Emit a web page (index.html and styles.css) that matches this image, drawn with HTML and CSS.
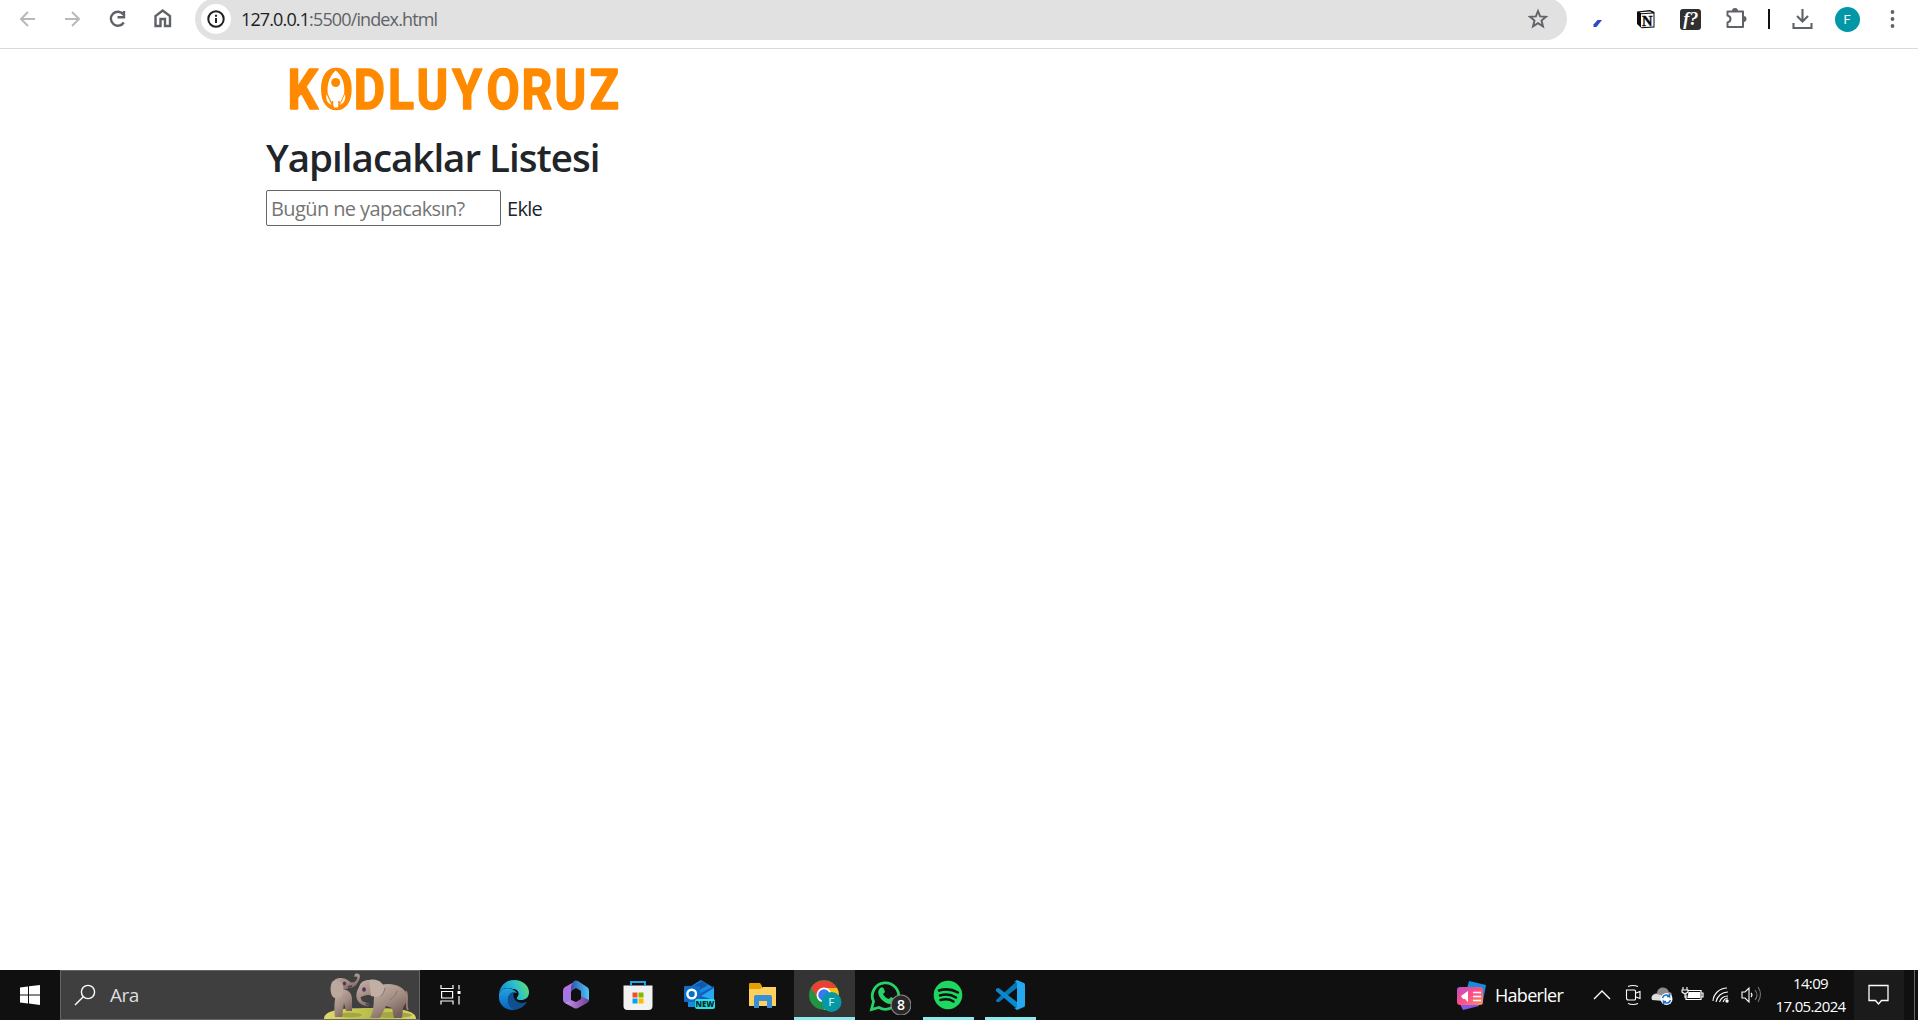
FILE: index.html
```html
<!DOCTYPE html>
<html lang="tr">
<head>
<meta charset="utf-8">
<title>Yapılacaklar Listesi</title>
<link rel="stylesheet" href="styles.css">
</head>
<body>
<header class="toolbar">
  <nav class="nav">
    <svg class="nav-icon faded" viewBox="0 0 45 38"><path d="M30 19H16.500M23 12l-7 7 7 7"/></svg>
    <svg class="nav-icon faded" viewBox="0 0 45 38"><path d="M15 19h13.500M22 12l7 7-7 7"/></svg>
    <svg class="nav-icon" viewBox="0 0 45 38"><path class="bold" d="M28.500 14.500a7 7 0 1 0 .3 8M29 11v6.300h-6.500"/></svg>
    <svg class="nav-icon" viewBox="0 0 45 38"><path class="bold" d="M15.500 26V16l7.200-5.500L30 16v10h-5v-7h-4.500v7z"/></svg>
  </nav>
  <div class="omnibox">
    <span class="site-info"><svg width="18" height="18" viewBox="0 0 18 18"><circle cx="9" cy="9" r="7.700" fill="none" stroke="#202124" stroke-width="2"/><path d="M9 8v5M9 4.700v2" stroke="#202124" stroke-width="2"/></svg></span>
    <span class="url">127.0.0.1<span class="path">:5500/index.html</span></span>
    <svg class="star" width="22" height="22" viewBox="0 0 22 22"><path d="M11 3l2.100 5.400 5.900.4-4.500 3.700 1.500 5.800-5-3.200-5 3.200 1.500-5.800L3 8.800l5.900-.4z" fill="none" stroke="#5f6368" stroke-width="1.900"/></svg>
  </div>
  <div class="actions">
    <svg width="46" height="38" viewBox="0 0 46 38"><path d="M18.500 27v-2.500l4-4.500H27l-5.500 7z" fill="#3049c5"/></svg>
    <svg class="notion" width="44" height="38" viewBox="0 0 44 38"><path d="M13 11.500l13-1.500 4.500 2V27.500l-13 .8-4.500-4.200z" fill="#0b0b0b"/><path d="M17 14.300l12.500-.8v13l-12.500.7zM15.500 12.300l10.500-.9 2 1-10.300.8z" fill="#fff"/><text x="23.300" y="25.500" text-anchor="middle" font-family="Liberation Serif, serif" font-size="14.500" font-weight="700" fill="#0b0b0b" stroke="#0b0b0b" stroke-width=".4">N</text></svg>
    <svg width="45" height="38" viewBox="0 0 45 38"><rect x="12" y="9" width="21" height="21" rx="3" fill="#303030"/><text x="22.800" y="25" text-anchor="middle" font-family="Liberation Serif, serif" font-size="18" font-weight="700" font-style="italic" fill="#fff">f?</text></svg>
    <svg width="46" height="38" viewBox="0 0 46 38"><path d="M14.500 11.500h15.500v15.500H14.500v-4.500c4-1 4-6 0-7z" fill="none" stroke="#5f6368" stroke-width="2" stroke-linejoin="round"/><path d="M19 11a3 3 0 0 1 6 0zM30.500 16a3 3 0 0 1 0 6z" fill="#5f6368"/></svg>
    <span class="divider"></span>
    <svg width="46" height="38" viewBox="0 0 46 38"><path d="M23.500 9v12M18 16l5.500 5.500L29 16M14.500 23v5h18v-5" fill="none" stroke="#5f6368" stroke-width="2.100"/></svg>
    <span class="slot"><span class="avatar">F</span></span>
    <svg width="43" height="38" viewBox="0 0 43 38" fill="#5f6368"><circle cx="21.500" cy="12" r="1.900"/><circle cx="21.500" cy="19" r="1.900"/><circle cx="21.500" cy="26" r="1.900"/></svg>
  </div>
</header>

<main class="page">
  <svg class="logo" width="370" height="80" viewBox="0 0 370 80" role="img" aria-label="Kodluyoruz">
    <text class="logo-text" transform="translate(0 59) scale(.86 1)" x="25 62.500 102 142 175 216.500 256.500 297 335.500 376.500">KODLUYORUZ</text>
    <rect x="57" y="19.500" width="26" height="38" rx="11" fill="#ff8a00"/>
    <path d="M69.700 20.500c-5 4-9 12-8 23l4 9 2.500 5h3.500l2.500-5 4-9c1-11-3-19-8.500-23zM60.500 44c-1 6 1 9 5 11zM79 44c1 6-1 9-5 11z" fill="#fff"/>
    <circle cx="69.700" cy="32.500" r="4.500" fill="#ff8a00"/><path d="M66.500 51v5M73 51v5" stroke="#ff8a00" stroke-width="1.500"/>
  </svg>
  <h1 class="title">Yapılacaklar Listesi</h1>
  <div class="entry">
    <input class="task" type="text" placeholder="Bugün ne yapacaksın?">
    <span class="add">Ekle</span>
  </div>
</main>

<footer class="taskbar">
  <div class="start"><svg width="20" height="20" viewBox="0 0 20 20" fill="#fff"><path d="M0 2.600l8-1.100V9.500H0zM9 1.300L20 0v9.500H9zM0 10.500h8v8l-8-1.100zM9 10.500h11V20L9 18.600z"/></svg></div>
  <div class="search">
    <svg class="lens" width="22" height="22" viewBox="0 0 22 22"><circle cx="14" cy="8" r="6.600"/><path d="M9.300 12.700L1 21"/></svg>
    <span class="search-label">Ara</span>
    <svg class="elephants" width="96" height="48" viewBox="0 0 96 48">
      <defs>
        <linearGradient id="skin" x1="0" y1="0" x2=".6" y2="1"><stop offset="0" stop-color="#c7b5a8"/><stop offset=".6" stop-color="#a28d83"/><stop offset="1" stop-color="#765f59"/></linearGradient>
        <linearGradient id="grass" x2="1"><stop stop-color="#e1d96d"/><stop offset=".5" stop-color="#b7bd4b"/><stop offset="1" stop-color="#d8d46a"/></linearGradient>
      </defs>
      <path d="M1 48c0-8 12-11 46-11s46 3 46 11z" fill="url(#grass)"/>
      <ellipse cx="27" cy="44" rx="12" ry="2.500" fill="#a3a83e"/><ellipse cx="69" cy="44" rx="20" ry="3" fill="#a3a83e"/>
      <path d="M14 19c7-2 14 0 15 8v13h-6l-2-8-2 14h-7c-1-6-1-18 2-27z" fill="url(#skin)"/>
      <path d="M9 15C9 6 20 5 26 10c3 3 7 1 8-2 1-2 0-3-3-2l1-3c6-2 6 4 3 8-2 4-5 6-9 6l-7 3z" fill="url(#skin)"/>
      <path d="M9 11c-3 6-1 16 3 16 7 0 10-5 8-12-1-5-7-8-11-4z" fill="#bba79b"/><ellipse cx="21.500" cy="12.500" rx="1.600" ry="2" fill="#54345c"/><path d="M25 16l4-1" stroke="#54345c" stroke-width="1.500"/>
      <path d="M58 14c9-3 23 0 26 10 1 8-4 11-4 14l-1 9h-8l-2-10-6-2-6 12h-10c5-9 3-20 5-28z" fill="url(#skin)"/>
      <path d="M83 20c3 6-1 14 2 19" fill="none" stroke="#a18478" stroke-width="1.600"/>
      <path d="M36 16C39 6 53 8 58 15c2 8-6 11-12 9-3 0-9 1-8 4 1 3 4 3 7 4 3 2 1 4-2 3-10-2-12-11-7-19z" fill="url(#skin)"/>
      <path d="M46 9c10-2 16 4 15 11-2 5-7 7-13 5z" fill="#c1afa3"/><path d="M62 17c-1 4-2 6-4 8M74 20c-1 4-4 7-7 9" stroke="#887268" fill="none"/><ellipse cx="41" cy="18.500" rx="1.800" ry="2.200" fill="#54345c"/><path d="M38 26l2 2M43 33l3 1" stroke="#54345c" stroke-width="1.500"/>
    </svg>
  </div>
  <div class="taskview"><svg width="22" height="20" viewBox="0 0 22 20" fill="none" stroke="#fff" stroke-width="1.200"><path d="M1 0v3.500h12V0M1 19.500V16h12v3.500M1.600 6.500h11v6.500h-11zM19 0v4.500M19 11v8.500"/><path d="M17.500 6h3v3h-3z" fill="#fff" stroke="none"/></svg></div>
  <div class="apps">
    <div class="app"><svg width="30" height="30" viewBox="0 0 30 30">
      <defs><linearGradient id="edgeA" x2="1" y1=".3"><stop stop-color="#168bd3"/><stop offset=".5" stop-color="#2bc1cd"/><stop offset="1" stop-color="#6be05c"/></linearGradient><linearGradient id="edgeB" x2="0" y2="1"><stop stop-color="#21a4e1"/><stop offset="1" stop-color="#0863bd"/></linearGradient></defs>
      <path d="M0 13C2 4 8 0 15 0c9 0 15 6 15 12 0 6-4 8-8 8-5 0-5-2-3-4 2-4-1-7-5-7C8 7 3 8 0 13z" fill="url(#edgeA)"/>
      <path d="M0 14c2-7 13-8 18-1-5-2-9 2-9 7 0 6 4 9 9 9-11 4-20-6-18-15z" fill="url(#edgeB)"/><path d="M9 18c1-4 3-6 6-6-2 6 2 11 8 11 2 0 3-1 5-1-4 6-9 8-13 7-5-2-7-6-6-11z" fill="#114f91"/></svg></div>
    <div class="app"><svg width="28" height="30" viewBox="0 0 28 30">
      <defs><linearGradient id="offA" x2="0" y2="1"><stop stop-color="#c16be4"/><stop offset="1" stop-color="#8f7fe0"/></linearGradient><linearGradient id="offB" x2="1"><stop stop-color="#3451a8"/><stop offset="1" stop-color="#4cc8fa"/></linearGradient><linearGradient id="offC" x2="1"><stop stop-color="#cb91ee"/><stop offset="1" stop-color="#704192"/></linearGradient></defs>
      <path d="M14 1L3 7Q1 8 1 11v9q0 2 2 3l6 3V12z" fill="url(#offA)"/><path d="M12 1q2-1 4 0l9 6q2 1 2 4v10l-8-4v-6l-5-3-5 3V6z" fill="url(#offB)"/><path d="M3 23l6-3 5 2 5-3v-3l8 4q0 2-2 3l-9 5q-2 1-4 0z" fill="url(#offC)"/></svg></div>
    <div class="app"><svg width="30" height="30" viewBox="0 0 30 30"><path d="M.5 5.500h29V26q0 4-4 4h-21q-4 0-4-4z" fill="#f2f2f3"/><path d="M8 6V2h14v4" fill="none" stroke="#20a5e8" stroke-width="2"/><path d="M9.500 12.500h5v5h-5z" fill="#f25022"/><path d="M15.500 12.500h5v5h-5z" fill="#7fba00"/><path d="M9.500 18.500h5v5h-5z" fill="#00a4ef"/><path d="M15.500 18.500h5v5h-5z" fill="#ffb900"/></svg></div>
    <div class="app"><svg width="31" height="30" viewBox="0 0 31 30"><path d="M4 8l13-8 13 8v14l-13 5H4z" fill="#138cdb"/><path d="M9 6l9-5 6 4-10 6z" fill="#1a55ad"/><path d="M15 14l15-8v15H15z" fill="#1b5bc0"/><path d="M17 16l13-8v12z" fill="#28a8ee"/><rect x="0" y="6" width="16" height="16" rx="1" fill="#0b6fc9"/><circle cx="7.700" cy="14" r="4.300" fill="none" stroke="#fff" stroke-width="2.400"/><rect x="11" y="19" width="20" height="10" rx="2" fill="#2ce1dd"/><text x="21" y="27" text-anchor="middle" font-family="Open Sans, sans-serif" font-size="7.800" font-weight="800" fill="#062c36">NEW</text></svg></div>
    <div class="app"><svg width="28" height="28" viewBox="0 0 28 28"><path d="M1 3q0-1 1-1h10l2 3v4H1z" fill="#e3a003"/><path d="M1 8h11l3-2h13v19H1z" fill="#ffd15c"/><path d="M6 27V16q0-2 2-2h14q2 0 2 2v11h-5v-7h-8v7z" fill="#398fd7"/></svg></div>
    <div class="app active"><svg width="33" height="33" viewBox="0 0 33 33"><circle cx="15" cy="15" r="15" fill="#229342"/><path d="M2 8A15 15 0 0 1 28 8H15l-6 10z" fill="#e94235"/><path d="M15 8h13q2 3 2 7a15 15 0 0 1-15 15l7-12z" fill="#fbc116"/><circle cx="15" cy="15" r="7.500" fill="#fff"/><circle cx="15" cy="15" r="5.800" fill="#3879ed"/><circle cx="22.500" cy="22" r="10" fill="#0798a6"/><text x="22.500" y="26" text-anchor="middle" font-family="Roboto, sans-serif" font-size="11" fill="#d9fbff">F</text></svg></div>
    <div class="app"><svg class="whatsapp" width="42" height="36" viewBox="0 0 42 36"><path d="M2.500 30.500l2-8A13.200 13.200 0 1 1 10 28.500z" fill="none" stroke="#25d366" stroke-width="2.800"/><path d="M11 9q3-2 4 1l1 3-2 2q2 4 6 5l2-2 4 2q0 5-5 5-4 0-9-5-5-6-1-11z" fill="#25d366"/><circle cx="32" cy="26" r="10" fill="#292929" stroke="#858585" stroke-width="1.200"/><text x="32" y="31" text-anchor="middle" font-family="Open Sans, sans-serif" font-size="14" font-weight="600" fill="#fff">8</text></svg></div>
    <div class="app running"><svg width="30" height="30" viewBox="0 0 30 30"><circle cx="15" cy="15" r="14.300" fill="#1ed760"/><path d="M6 10.500q10-3 19 2M7 15.500q9-2.500 16 2M7.500 20q8-2 13 1.500" fill="none" stroke="#111" stroke-width="2.500" stroke-linecap="round"/></svg></div>
    <div class="app running"><svg width="30" height="30" viewBox="0 0 30 30"><path d="M1 20L22 1v7L4 22q-1 1-3-1z" fill="#0877b9"/><path d="M1 9l2-1q1 0 2 1l17 13v7L1 11z" fill="#0b89d0"/><path d="M22 0l7 3q1 .5 1 2v20q0 2-1 2l-7 3-3-2q3 1 3-2V4q0-3-3-2z" fill="#27a7ee"/></svg></div>
  </div>

  <div class="news"><svg width="30" height="31" viewBox="0 0 30 31"><defs><linearGradient id="newsGrad" x2="1" y2="1"><stop stop-color="#b851c9"/><stop offset=".5" stop-color="#ff4d85"/><stop offset="1" stop-color="#fa9462"/></linearGradient></defs><path d="M13 1l17 4-3 16-18-5z" fill="#168dde"/><path d="M3 22l17-3 3 7-16 4z" fill="#8756ec"/><rect x="1" y="7" width="26" height="18" rx="3" fill="url(#newsGrad)"/><path d="M5 16l7-5v11l-3-3H7z" fill="#fff"/><path d="M17 12.500h8M17 16.500h8M17 20.500h8" stroke="#fff" stroke-width="1.300"/></svg><span class="news-label">Haberler</span></div>
  <div class="tray">
    <svg viewBox="0 0 30 30"><path d="M7 19l8-8 8 8" stroke-width="1.400"/></svg>
    <svg viewBox="0 0 30 30"><path d="M9.500 10h8q1 0 1 1v8q0 1-1 1h-6q-2 0-2-2zM19 13l4-1.500v7L19 17M11 6.500q5-2 10 0M11 23.500q5 2 10 0"/></svg>
    <svg viewBox="0 0 30 30"><path d="M5 19q-1-5 5-6c1-7 10-7 12-1 4 0 4 7 0 7z" fill="#8c8c8c" stroke="none"/><path d="M5 20q-2-5 4-6l5 1 3 6z" fill="#dedede" stroke="none"/><circle cx="19.500" cy="19" r="6" fill="#fff" stroke="none"/><path d="M15.500 18a4 4 0 0 1 7-1.500V14m0 2.500H20M23.500 20a4 4 0 0 1-7 1.500V24m0-2.500H19" stroke="#166fc3" stroke-width="1.500"/></svg>
    <svg viewBox="0 0 30 30"><path d="M11 10.500h13v9H9v-5M24 13h2v4h-2" stroke-width="1.200"/><path d="M12 12.500h10.500v5H11z" fill="#fff"/><path d="M6 7v3M10 7v3M5 10h6v2q-3 3-6 0zM8 13v5"/></svg>
    <svg viewBox="0 0 30 30"><path d="M6 21A14 14 0 0 1 20 8M9 22A12 12 0 0 1 21 12M12.500 22A9 9 0 0 1 21 16M16 22a6 6 0 0 1 5-4"/><circle cx="20" cy="21" r="1.700" fill="#fff" stroke="none"/></svg>
    <svg viewBox="0 0 30 30"><path d="M5 12h3l4-4v14l-4-4H5zM14 13q2 2 0 4"/><path d="M18 10q4 5 0 10M21 7q5 7 0 15" stroke="#777"/></svg>
  </div>
  <div class="clock"><span>14:09</span><span class="date">17.05.2024</span></div>
  <div class="notice"><svg width="22" height="22" viewBox="0 0 22 22" fill="none" stroke="#fff" stroke-width="1.300"><path d="M1 1.500h19v15h-6.500L10.500 20l-3-3.500H1z"/></svg></div>
  <div class="desktop"></div>
</footer>
</body>
</html>
```
FILE: styles.css
```css
* { box-sizing: border-box; }
html, body { height: 100%; }
body {
  margin: 0;
  display: flex;
  flex-direction: column;
  overflow: hidden;
  background: #fff;
  color: #212529;
  font-family: "Open Sans", "Noto Sans", sans-serif;
}
svg { flex: none; display: block; }

.toolbar {
  display: flex;
  align-items: flex-start;
  height: 49px;
  flex: none;
  border-bottom: 1px solid #dadada;
}
.nav { display: flex; width: 195px; padding-left: 5px; }
.nav-icon { width: 45px; height: 38px; fill: none; stroke: #5f6368; stroke-width: 2; }
.nav-icon .bold { stroke-width: 2.4; }
.nav-icon.faded { stroke: #b9b9b9; }
.omnibox {
  display: flex;
  align-items: center;
  width: 1372px;
  height: 42px;
  margin-top: -2px;
  padding: 0 18px 0 6px;
  background: #e1e1e1;
  border-radius: 21px;
}
.site-info {
  display: flex;
  align-items: center;
  justify-content: center;
  width: 30px;
  height: 30px;
  border-radius: 50%;
  background: #fff;
}
.url { margin-left: 10px; font-size: 18px; letter-spacing: -.87px; line-height: 24px; color: #202124; }
.path { color: #606367; }
.star { margin-left: auto; }
.actions { display: flex; align-items: center; height: 38px; margin-left: 8px; }
.notion { margin-left: 3px; }
.divider { width: 2px; height: 20px; margin: 0 9px; background: #111; }
.slot { display: flex; justify-content: center; width: 44px; margin-right: 2px; }
.avatar {
  width: 25px;
  height: 25px;
  border-radius: 50%;
  background: #0097a7;
  color: #fff;
  font: 13px/26px Roboto, sans-serif;
  text-align: center;
}

.page { flex: 1; padding: 1px 0 0 266px; }
.logo-text {
  font: 700 56px Roboto, sans-serif;
  fill: #ff8a00;
  stroke: #ff8a00;
  stroke-width: 1.6;
  stroke-linejoin: round;
}
.title { margin: 3px 0 9px; font-size: 38.5px; line-height: 48px; font-weight: 600; letter-spacing: -1px; }
.entry { display: flex; align-items: center; gap: 6px; font-size: 20px; }
.task {
  width: 235px;
  height: 36px;
  padding: 1px 4px;
  border: 1px solid #666;
  border-radius: 2px;
  font: inherit;
  letter-spacing: -.6px;
}
.task::placeholder { color: #757575; opacity: 1; }
.add { letter-spacing: -.7px; }

.taskbar { display: flex; flex: none; height: 50px; background: #101010; color: #fff; }
.start, .taskview, .notice { display: flex; align-items: center; justify-content: center; }
.start { width: 60px; }
.search {
  display: flex;
  align-items: center;
  width: 360px;
  padding-left: 13px;
  background: #3f3f3f;
  border: 1px solid #666;
}
.lens { fill: none; stroke: #fff; stroke-width: 1.4; }
.search-label { margin-left: 14px; font-size: 19px; letter-spacing: -.5px; color: #dedede; }
.elephants { margin-left: auto; }
.taskview { width: 63px; padding-right: 2px; }
.apps { display: flex; }
.app { position: relative; display: flex; align-items: center; justify-content: center; width: 62px; padding-right: 1px; }
.active { background: #343434; width: 61px; margin-left: 1px; }
.active::after, .running::after {
  content: "";
  position: absolute;
  bottom: 0;
  left: 6px;
  right: 5px;
  height: 3px;
  background: #8ee9ef;
}
.active::after { left: 0; right: 0; }
.active svg { margin: 2px 0 0 2px; }
.whatsapp { margin: 3px 0 0 8px; }
.news { display: flex; align-items: center; margin-left: auto; }
.news-label { margin-left: 9px; width: 92px; font-size: 18px; letter-spacing: -.7px; }
.tray { display: flex; align-items: center; width: 179px; margin-right: 1px; }
.tray svg { width: 30px; height: 30px; fill: none; stroke: #fff; stroke-width: 1.1; }
.clock {
  display: flex;
  flex-direction: column;
  align-items: center;
  width: 87px;
  padding-top: 2px;
  font-size: 15px;
  line-height: 23px;
  letter-spacing: -.65px;
}
.notice { width: 50px; background: #1b1b1b; }
.desktop { width: 14px; background: linear-gradient(#666, #666) 10px 0 / 1px 100% no-repeat; }
```
